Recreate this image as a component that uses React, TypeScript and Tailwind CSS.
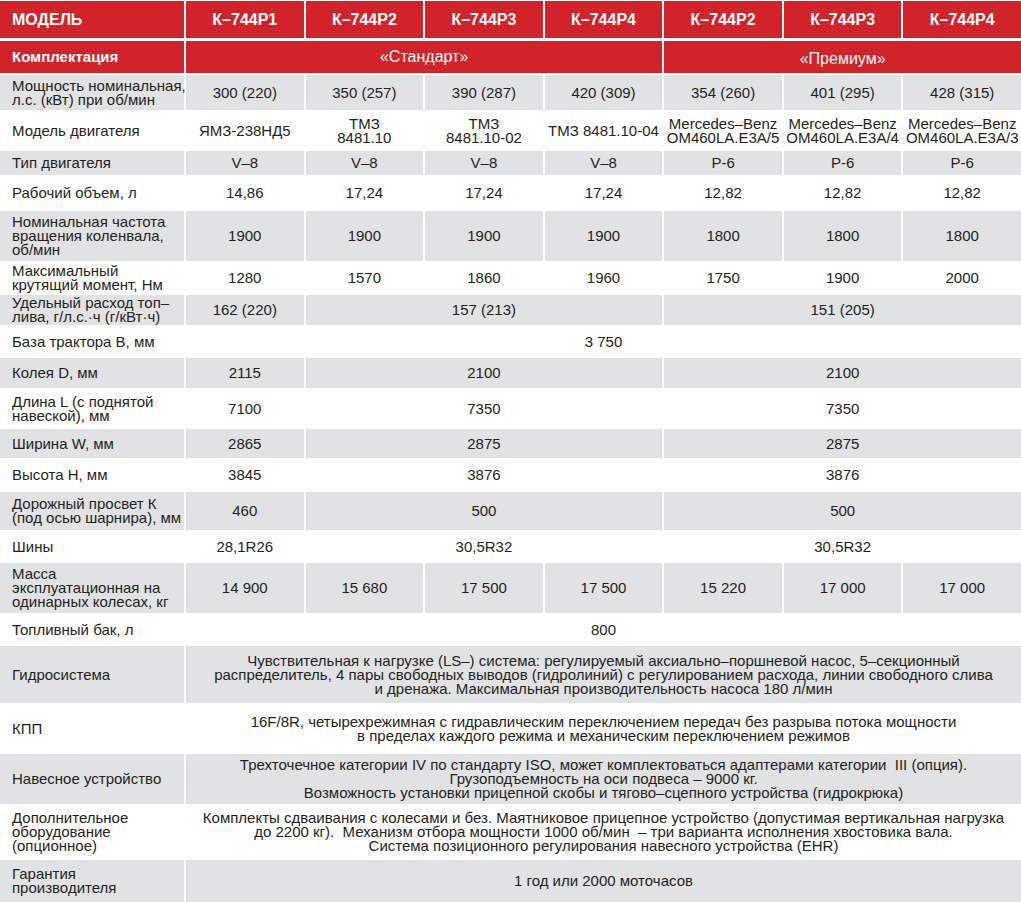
import React from "react";

type Cell = { span: number; text: React.ReactNode };
type Row = { label: React.ReactNode; gray: boolean; h: string; cells: Cell[] };

const spanClass: Record<number, string> = {
  1: "col-span-1",
  3: "col-span-3",
  4: "col-span-4",
  7: "col-span-7",
};

const one = (...v: React.ReactNode[]): Cell[] => v.map((t) => ({ span: 1, text: t }));
const split = (a: string, b: string, c: string): Cell[] => [
  { span: 1, text: a },
  { span: 3, text: b },
  { span: 3, text: c },
];
const full = (t: React.ReactNode): Cell[] => [{ span: 7, text: t }];

const rows: Row[] = [
  {
    label: (<>Мощность номинальная,<br />л.с. (кВт) при об/мин</>),
    gray: true,
    h: "h-[35px]",
    cells: one("300 (220)", "350 (257)", "390 (287)", "420 (309)", "354 (260)", "401 (295)", "428 (315)"),
  },
  {
    label: "Модель двигателя",
    gray: false,
    h: "h-[41px]",
    cells: one(
      "ЯМЗ-238НД5",
      <>ТМЗ<br />8481.10</>,
      <>ТМЗ<br />8481.10-02</>,
      "ТМЗ 8481.10-04",
      <>Mercedes–Benz<br />OM460LA.E3A/5</>,
      <>Mercedes–Benz<br />OM460LA.E3A/4</>,
      <>Mercedes–Benz<br />OM460LA.E3A/3</>
    ),
  },
  { label: "Тип двигателя", gray: true, h: "h-[24px]", cells: one("V–8", "V–8", "V–8", "V–8", "P-6", "P-6", "P-6") },
  { label: "Рабочий объем, л", gray: false, h: "h-[36px]", cells: one("14,86", "17,24", "17,24", "17,24", "12,82", "12,82", "12,82") },
  {
    label: (<>Номинальная частота<br />вращения коленвала,<br />об/мин</>),
    gray: true,
    h: "h-[50px]",
    cells: one("1900", "1900", "1900", "1900", "1800", "1800", "1800"),
  },
  {
    label: (<>Максимальный<br />крутящий момент, Нм</>),
    gray: false,
    h: "h-[34px]",
    cells: one("1280", "1570", "1860", "1960", "1750", "1900", "2000"),
  },
  {
    label: (<>Удельный расход топ–<br />лива, г/л.с.·ч (г/кВт·ч)</>),
    gray: true,
    h: "h-[30px]",
    cells: split("162 (220)", "157 (213)", "151 (205)"),
  },
  { label: "База трактора B, мм", gray: false, h: "h-[33px]", cells: full("3 750") },
  { label: "Колея D, мм", gray: true, h: "h-[30px]", cells: split("2115", "2100", "2100") },
  { label: (<>Длина L (с поднятой<br />навеской), мм</>), gray: false, h: "h-[41px]", cells: split("7100", "7350", "7350") },
  { label: "Ширина W, мм", gray: true, h: "h-[29px]", cells: split("2865", "2875", "2875") },
  { label: "Высота H, мм", gray: false, h: "h-[34px]", cells: split("3845", "3876", "3876") },
  { label: (<>Дорожный просвет К<br />(под осью шарнира), мм</>), gray: true, h: "h-[38px]", cells: split("460", "500", "500") },
  { label: "Шины", gray: false, h: "h-[33px]", cells: split("28,1R26", "30,5R32", "30,5R32") },
  {
    label: (<>Масса<br />эксплуатационная на<br />одинарных колесах, кг</>),
    gray: true,
    h: "h-[50px]",
    cells: one("14 900", "15 680", "17 500", "17 500", "15 220", "17 000", "17 000"),
  },
  { label: "Топливный бак, л", gray: false, h: "h-[33px]", cells: full("800") },
  {
    label: "Гидросистема",
    gray: true,
    h: "h-[57px]",
    cells: full(
      <>
        Чувствительная к нагрузке (LS–) система: регулируемый аксиально–поршневой насос, 5–секционный<br />
        распределитель, 4 пары свободных выводов (гидролиний) с регулированием расхода, линии свободного слива<br />
        и дренажа. Максимальная производительность насоса 180 л/мин
      </>
    ),
  },
  {
    label: "КПП",
    gray: false,
    h: "h-[51px]",
    cells: full(
      <>
        16F/8R, четырехрежимная с гидравлическим переключением передач без разрыва потока мощности<br />
        в пределах каждого режима и механическим переключением режимов
      </>
    ),
  },
  {
    label: "Навесное устройство",
    gray: true,
    h: "h-[50px]",
    cells: full(
      <>
        Трехточечное категории IV по стандарту ISO, может комплектоваться адаптерами категории&nbsp; III (опция).<br />
        Грузоподъемность на оси подвеса – 9000 кг.<br />
        Возможность установки прицепной скобы и тягово–сцепного устройства (гидрокрюка)
      </>
    ),
  },
  {
    label: (<>Дополнительное<br />оборудование<br />(опционное)</>),
    gray: false,
    h: "h-[56px]",
    cells: full(
      <>
        Комплекты сдваивания с колесами и без. Маятниковое прицепное устройство (допустимая вертикальная нагрузка<br />
        до 2200 кг).&nbsp; Механизм отбора мощности 1000 об/мин&nbsp; – три варианта исполнения хвостовика вала.<br />
        Система позиционного регулирования навесного устройства (EHR)
      </>
    ),
  },
  { label: (<>Гарантия<br />производителя</>), gray: true, h: "h-[42px]", cells: full("1 год или 2000 моточасов") },
];

const models = ["К–744Р1", "К–744Р2", "К–744Р3", "К–744Р4", "К–744Р2", "К–744Р3", "К–744Р4"];

export default function App() {
  return (
    <div className="w-[1021px] h-[902px] overflow-hidden bg-white pt-[1px] font-['Liberation_Sans',Arial,sans-serif] text-[#231f20]">
      {/* шапка */}
      <div className="grid h-[37px] grid-cols-[184px_repeat(7,minmax(0,1fr))] gap-x-[2px] text-[16px] font-bold text-white">
        <div className="flex items-center bg-[#d2232a] pl-3">МОДЕЛЬ</div>
        {models.map((m, i) => (
          <div key={i} className="flex items-center justify-center bg-[#d2232a]">
            {m}
          </div>
        ))}
      </div>
      <div className="mt-[3px] grid h-[32px] grid-cols-[184px_repeat(7,minmax(0,1fr))] gap-x-[2px] text-white">
        <div className="flex items-center bg-[#d2232a] pl-3 text-[15px] font-bold">Комплектация</div>
        <div className="col-span-4 flex items-center justify-center bg-[#d2232a] text-[16px]">«Стандарт»</div>
        <div className="col-span-3 flex items-center justify-center bg-[#d2232a] pt-1 text-[16px]">«Премиум»</div>
      </div>

      <div className="mt-[2px] flex flex-col text-[15px] leading-[14px]">
        {rows.map((r, i) => {
          const bg = r.gray ? "bg-[#e1e2e4]" : "bg-white";
          return (
            <div key={i} className={`grid grid-cols-[184px_repeat(7,minmax(0,1fr))] gap-x-[2px] ${r.h}`}>
              <div className={`flex items-center pl-3 ${bg}`}>
                <div className="whitespace-nowrap">{r.label}</div>
              </div>
              {r.cells.map((c, j) => (
                <div key={j} className={`flex items-center justify-center text-center ${spanClass[c.span]} ${bg}`}>
                  <div className="whitespace-nowrap">{c.text}</div>
                </div>
              ))}
            </div>
          );
        })}
      </div>
    </div>
  );
}
